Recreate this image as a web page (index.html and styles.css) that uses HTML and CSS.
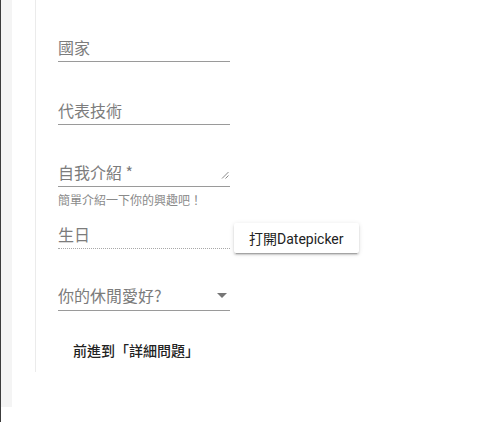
FILE: index.html
```html
<!DOCTYPE html>
<html lang="zh-Hant">
<head>
<meta charset="utf-8">
<title>Form</title>
<link rel="stylesheet" href="styles.css">
</head>
<body>
<div class="frame">
  <div class="edge"></div>
  <div class="strip"></div>
  <div class="spacer"></div>
  <div class="panel">
    <div class="field f-country"><span class="ph">國家</span></div>
    <div class="field f-skill"><span class="ph">代表技術</span></div>
    <div class="field f-intro">
      <span class="ph">自我介紹 *</span>
      <svg class="resize" width="8" height="8" viewBox="0 0 8 8"><path d="M1 7.5L7.5 1M4.5 7.5L7.5 4.5" stroke="#8a8a8a" stroke-width="1" fill="none"/></svg>
    </div>
    <div class="hint">簡單介紹一下你的興趣吧！</div>
    <div class="row">
      <div class="field f-birth"><span class="ph">生日</span></div>
      <button class="raised">打開Datepicker</button>
    </div>
    <div class="field f-hobby"><span class="ph">你的休閒愛好?</span><span class="arrow"></span></div>
    <button class="flat">前進到「詳細問題」</button>
  </div>
</div>
</body>
</html>
```
FILE: styles.css
```css
html, body {
  margin: 0;
  background: #ffffff;
}
body {
  font-family: "Roboto", "Noto Sans CJK TC", sans-serif;
  width: 480px;
  height: 422px;
  overflow: hidden;
}
.frame {
  display: flex;
  height: 422px;
}
.edge {
  width: 1px;
  background: #3c3c3c;
}
.strip {
  width: 11px;
  height: 407px;
  background: #f4f4f4;
}
.spacer {
  width: 23px;
}
.panel {
  align-self: flex-start;
  border-left: 1px solid #ebebeb;
  padding: 34px 0 4px 22px;
  display: flex;
  flex-direction: column;
  align-items: flex-start;
}
.field {
  width: 172px;
  height: 25px;
  padding-bottom: 1px;
  display: flex;
  align-items: center;
  border-bottom: 1px solid #9a9a9a;
  box-sizing: content-box;
}
.f-country { height: 26px; }
.ph {
  flex: 1;
  font-family: "Noto Sans CJK TC", "Roboto", sans-serif;
  font-size: 16px;
  line-height: 25px;
  color: #7c7c7c;
}
.f-skill { margin-top: 36px; }
.f-intro { margin-top: 35px; }
.resize {
  margin-right: 1px;
  margin-top: 5px;
}
.hint {
  margin-top: 5px;
  font-family: "Noto Sans CJK TC", sans-serif;
  font-size: 12px;
  line-height: 16px;
  color: #8a8a8a;
}
.row {
  display: flex;
  align-items: flex-start;
  gap: 4px;
  margin-top: 14px;
}
.f-birth {
  border-bottom: 1px dotted #a8a8a8;
}
.raised {
  margin-top: 1px;
  height: 30px;
  padding: 0 15px;
  border: none;
  border-radius: 2px;
  background: #ffffff;
  color: #222222;
  font-family: "Roboto", "Noto Sans CJK TC", sans-serif;
  font-size: 14px;
  font-weight: 400;
  box-shadow: 0 3px 1px -2px rgba(0,0,0,.2), 0 2px 2px 0 rgba(0,0,0,.14), 0 1px 5px 0 rgba(0,0,0,.12);
}
.f-hobby {
  margin-top: 31px;
  height: 22px;
  padding-bottom: 4px;
}
.arrow {
  width: 0;
  height: 0;
  border-left: 5px solid transparent;
  border-right: 5px solid transparent;
  border-top: 5px solid #767676;
  margin-right: 3px;
  margin-top: 1px;
}
.flat {
  margin-top: 21px;
  margin-left: -1px;
  height: 36px;
  padding: 0 16px;
  border: none;
  background: transparent;
  color: #222222;
  font-family: "Noto Sans CJK TC", sans-serif;
  font-size: 14px;
  font-weight: 500;
}
```
